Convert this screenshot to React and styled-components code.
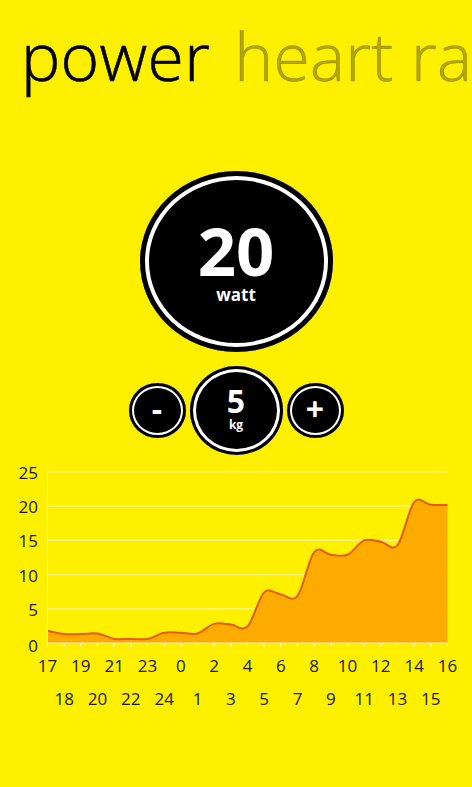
import React from "react";
import styled, { createGlobalStyle } from "styled-components";

const GlobalStyle = createGlobalStyle`
  body {
    margin: 0;
    background: #fff000;
    font-family: "Open Sans", "Noto Sans", sans-serif;
  }
`;

// values read per hour, 17h yesterday -> 16h today
const horas = [17, 18, 19, 20, 21, 22, 23, 24, 0, 1, 2, 3, 4, 5, 6, 7, 8, 9, 10, 11, 12, 13, 14, 15, 16];
const valores = [
  1.8, 1.3, 1.3, 1.4, 0.6, 0.6, 0.6, 1.5, 1.5, 1.4, 2.8, 2.7, 2.4, 7.4, 7.1,
  6.9, 13.3, 12.9, 12.9, 15, 14.8, 14.3, 20.6, 20.2, 20.2,
];

const X0 = 47.5;
const PASSO = 400 / 24;
const Y0 = 644;
const ESCALA = (644 - 473) / 25;

const px = (i) => X0 + i * PASSO;
const py = (v) => Y0 - v * ESCALA;

function curva(pts) {
  let d = `M${pts[0][0]},${pts[0][1]}`;
  for (let i = 0; i < pts.length - 1; i++) {
    const p0 = pts[i - 1] || pts[i];
    const p1 = pts[i];
    const p2 = pts[i + 1];
    const p3 = pts[i + 2] || p2;
    const c1x = p1[0] + (p2[0] - p0[0]) / 6;
    const c1y = p1[1] + (p2[1] - p0[1]) / 6;
    const c2x = p2[0] - (p3[0] - p1[0]) / 6;
    const c2y = p2[1] - (p3[1] - p1[1]) / 6;
    d += ` C${c1x},${c1y} ${c2x},${c2y} ${p2[0]},${p2[1]}`;
  }
  return d;
}

export default function App() {
  const pts = valores.map((v, i) => [px(i), py(v)]);
  const linha = curva(pts);
  const area = `${linha} L${px(24)},${Y0} L${X0},${Y0} Z`;

  return (
    <Page>
      <GlobalStyle />
      <Pivot>
        <PivotItem $ativo>power</PivotItem>
        <PivotItem>heart rate</PivotItem>
      </Pivot>

      <Medidor>
        <Numero>20</Numero>
        <Unidade>watt</Unidade>
      </Medidor>

      <Controles>
        <BotaoRedondo>-</BotaoRedondo>
        <Carga>
          <CargaNumero>5</CargaNumero>
          <CargaUnidade>kg</CargaUnidade>
        </Carga>
        <BotaoRedondo>+</BotaoRedondo>
      </Controles>

      <Grafico viewBox="0 456 472 260" width="472" height="260">
        {[0, 5, 10, 15, 20, 25].map((v) => (
          <g key={v}>
            {v > 0 && (
              <line x1={X0} x2={px(24)} y1={py(v)} y2={py(v)} className="grade" />
            )}
            <text x="38" y={py(v) + (v === 0 ? 9 : 7)} textAnchor="end">
              {v}
            </text>
          </g>
        ))}
        <path d={area} fill="#ffab00" />
        <path d={linha} fill="none" stroke="#e65a0a" strokeWidth="2" />
        <line x1={X0} x2={X0} y1={py(25)} y2={Y0} className="eixo" />
        <line x1={X0} x2={px(24)} y1={Y0} y2={Y0} className="eixo" />
        {horas.map((h, i) => (
          <g key={i}>
            <line x1={px(i)} x2={px(i)} y1={Y0} y2={Y0 + 4} className="eixo" />
            <text x={px(i)} y={i % 2 === 0 ? 673 : 706} textAnchor="middle">
              {h}
            </text>
          </g>
        ))}
      </Grafico>
    </Page>
  );
}

const Page = styled.div`
  width: 472px;
  min-height: 787px;
  display: flex;
  flex-direction: column;
  overflow: hidden;
`;

const Pivot = styled.header`
  display: flex;
  gap: 24px;
  padding: 22px 0 0 21px;
  white-space: nowrap;
  font-size: 66px;
  line-height: 66px;
  font-weight: 300;
  letter-spacing: 0.3px;
  -webkit-text-stroke: 0.6px currentColor;
`;

const PivotItem = styled.span`
  color: ${(props) => (props.$ativo ? "#000" : "rgba(0, 0, 0, 0.3)")};
`;

const Medidor = styled.div`
  align-self: center;
  margin-top: 83px;
  width: 193px;
  height: 181px;
  box-sizing: border-box;
  padding-top: 47px;
  border-radius: 50%;
  background: #000;
  box-shadow: inset 0 0 0 5px #000, inset 0 0 0 9px #fff;
  display: flex;
  flex-direction: column;
  align-items: center;
  color: #fff;
  font-weight: 700;
`;

const Numero = styled.span`
  font-size: 67px;
  line-height: 64px;
`;

const Unidade = styled.span`
  margin-top: 4px;
  font-size: 17px;
  line-height: 17px;
`;

const Controles = styled.div`
  display: flex;
  justify-content: center;
  align-items: center;
  gap: 4px;
  margin-top: 14px;
  color: #fff;
  font-weight: 700;
`;

const BotaoRedondo = styled.button`
  width: 57px;
  height: 55px;
  padding: 0 0 4px;
  border: none;
  border-radius: 50%;
  background: #000;
  box-shadow: inset 0 0 0 3px #000, inset 0 0 0 5px #fff;
  color: #fff;
  font-family: inherit;
  font-size: 32px;
  font-weight: 700;
  display: flex;
  align-items: center;
  justify-content: center;
`;

const Carga = styled.div`
  width: 93px;
  height: 89px;
  box-sizing: border-box;
  padding-top: 20px;
  border-radius: 50%;
  background: #000;
  box-shadow: inset 0 0 0 3px #000, inset 0 0 0 6px #fff;
  display: flex;
  flex-direction: column;
  align-items: center;
`;

const CargaNumero = styled.span`
  font-size: 32px;
  line-height: 30px;
`;

const CargaUnidade = styled.span`
  margin-top: 3px;
  font-size: 12px;
  line-height: 12px;
`;

const Grafico = styled.svg`
  display: block;

  text {
    font-family: "Open Sans", "Noto Sans", sans-serif;
    font-size: 17px;
    fill: #1a1a1a;
  }

  .grade {
    stroke: rgba(255, 255, 255, 0.6);
    stroke-width: 1;
  }

  .eixo {
    stroke: rgba(255, 255, 255, 0.8);
    stroke-width: 1;
  }
`;
